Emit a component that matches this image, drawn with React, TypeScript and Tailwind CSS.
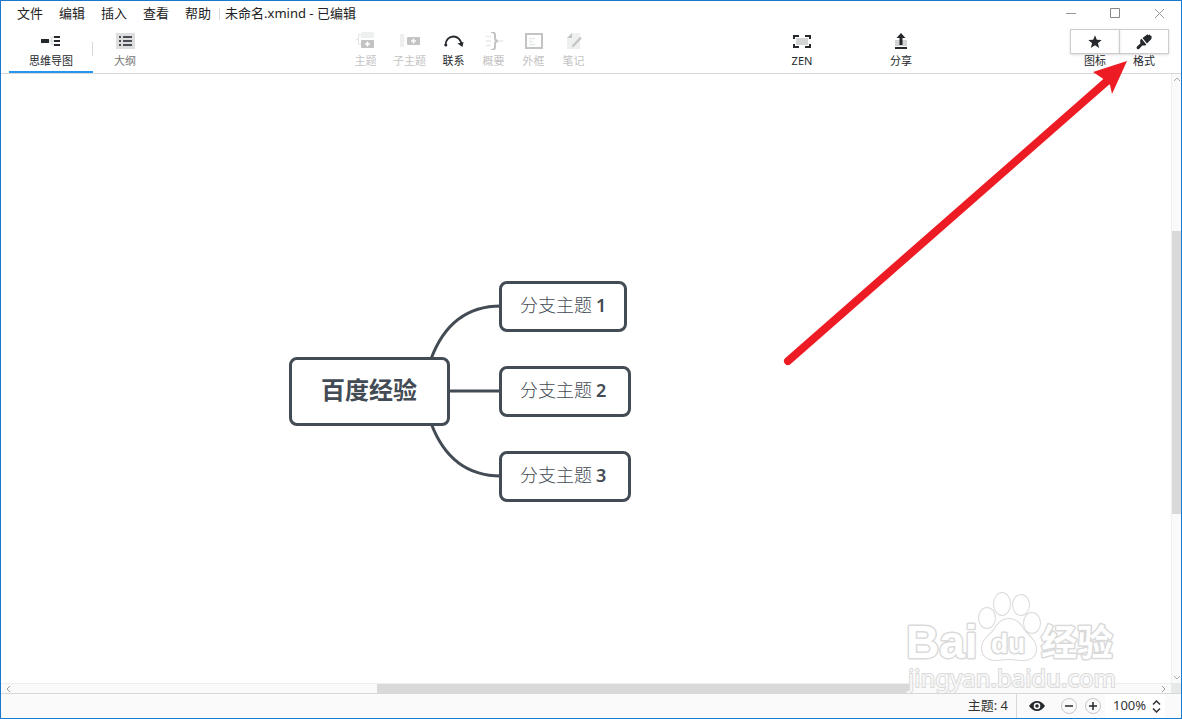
import React from "react";

const menus = ["文件", "编辑", "插入", "查看", "帮助"];

const MindMapIcon = () => (
  <svg width="20" height="18" viewBox="0 0 20 18" fill="none">
    <path d="M14 5h-1.500q-2 0-2 2v4q0 2 2 2H14M8 9h5" stroke="#dcdfdf" strokeWidth="1.500" />
    <path d="M0 7h8v4H0zM13 4h6v2h-6zM13 8h6v2h-6zM13 12h6v2h-6z" fill="#25292d" />
  </svg>
);

const OutlineIcon = () => (
  <svg width="20" height="18" viewBox="0 0 20 18">
    <path d="M1 1h19v16H1z" fill="#dedede" />
    <path
      d="M4 4h2v2H4zM8 4h9v2H8zM4 8h2v2H4zM8 8h9v2H8zM4 12h2v2H4zM8 12h9v2H8z"
      fill="#4a4f57"
    />
  </svg>
);

const TopicIcon = () => (
  <svg width="20" height="18" viewBox="0 0 20 18" fill="none">
    <path d="M5 2.500H2.500v10H5M0 7.500h2.500" stroke="#e3e6e6" />
    <rect x="5" y="0" width="13" height="6" rx="1" fill="#eef0f0" />
    <rect x="5" y="8" width="13" height="8" rx="1" fill="#c3c3c3" />
    <path d="M9 12h5M11.500 9.500v5" stroke="#fff" strokeWidth="1.500" />
  </svg>
);

const SubtopicIcon = () => (
  <svg width="20" height="18" viewBox="0 0 20 18" fill="none">
    <rect x="0" y="2" width="4" height="13" fill="#eef0f0" />
    <path d="M4 9h3" stroke="#eef0f0" />
    <rect x="7" y="5" width="13" height="8" rx="1" fill="#c3c3c3" />
    <path d="M11 9h5M13.500 6.500v5" stroke="#fff" strokeWidth="1.500" />
  </svg>
);

const RelationshipIcon = () => (
  <svg width="20" height="18" viewBox="0 0 20 18" fill="none">
    <path d="M1.500 13C1.500 8 5 4.500 9.500 4.500c4 0 6.500 2.500 8 7" stroke="#25292d" strokeWidth="1.800" />
    <circle cx="1.800" cy="13" r="1.500" fill="#25292d" />
    <path d="M13.500 11.500l6-1.500-1 5z" fill="#25292d" />
  </svg>
);

const SummaryIcon = () => (
  <svg width="20" height="18" viewBox="0 0 20 18" fill="none">
    <path d="M2 4.500h5M2 9h5M2 13.500h5M14 9h5" stroke="#e8eaea" strokeWidth="1.500" />
    <path
      d="M7 0c3 0 4 .8 4 3v3c0 2 .8 3 3 3-2.200 0-3 1-3 3v3c0 2.200-1 3-4 3"
      stroke="#c3c3c3"
      strokeWidth="2"
    />
  </svg>
);

const BoundaryIcon = () => (
  <svg width="20" height="18" viewBox="0 0 20 18" fill="none">
    <rect x="2" y="2" width="16" height="14" stroke="#c3c3c3" strokeWidth="2" />
    <path d="M5 6.500h6M5 9.500h4M5 12.500h6" stroke="#e6e9e9" strokeWidth="1.500" />
  </svg>
);

const NoteIcon = () => (
  <svg width="20" height="18" viewBox="0 0 20 18" fill="none">
    <path d="M8 1h8v16H3V6z" fill="#eef0f0" />
    <path d="M8 1v5H3z" fill="#c3c3c3" />
    <path d="M9.500 13.500l7.500-8" stroke="#c3c3c3" strokeWidth="2.200" />
    <path d="M8 15.500l.5-3 2 2z" fill="#c3c3c3" />
  </svg>
);

const ZenIcon = () => (
  <svg width="20" height="18" viewBox="0 0 20 18" fill="none">
    <path d="M4 6h12v7H4z" fill="#d3d5d5" />
    <path d="M2 7V4h5M13 4h5v3M18 12v3h-5M7 15H2v-3" stroke="#25292d" strokeWidth="2" />
  </svg>
);

const ShareIcon = () => (
  <svg width="20" height="18" viewBox="0 0 20 18">
    <path d="M4 8h12v6H4z" fill="#d3d5d5" />
    <path d="M4 15h12v2H4zM10 1l4.500 5h-3v7h-3V6h-3z" fill="#25292d" />
  </svg>
);

const StarIcon = () => (
  <svg width="14" height="14" viewBox="0 0 14 14">
    <path d="M7 .3l1.800 4.500 4.900.3-3.800 3.100 1.300 4.800L7 10.300 2.800 13l1.300-4.800L.3 5.100l4.900-.3z" fill="#25292d" />
  </svg>
);

const BrushIcon = () => (
  <svg width="16" height="16" viewBox="0 0 16 16">
    <path
      d="M6.500 4L11.500.300l1 1L13.800.500l.7 1.200 1.200.6-.3 2.700L11 9.500z M5.600 4.800l4.700 5.600-1 1.200-3-.2-3 3.300q-1.300 1-2.300 0t0-2.300l3.300-3L4.200 6z"
      fill="#25292d"
    />
  </svg>
);

const tools = [
  { label: "主题", icon: <TopicIcon />, width: "w-10", enabled: false },
  { label: "子主题", icon: <SubtopicIcon />, width: "w-12", enabled: false },
  { label: "联系", icon: <RelationshipIcon />, width: "w-10", enabled: true },
  { label: "概要", icon: <SummaryIcon />, width: "w-10", enabled: false },
  { label: "外框", icon: <BoundaryIcon />, width: "w-10", enabled: false },
  { label: "笔记", icon: <NoteIcon />, width: "w-10", enabled: false },
];

const branches = [
  { label: "分支主题", number: 1, position: "top-[207px] w-32" },
  { label: "分支主题", number: 2, position: "top-[292px] w-[132px]" },
  { label: "分支主题", number: 3, position: "top-[377px] w-[132px]" },
];

const TitleBar = () => (
  <div className="flex h-[25px] items-center pl-4 text-[13px] text-[#222]">
    <nav className="flex gap-4">
      {menus.map((menu) => (
        <button key={menu} type="button">
          {menu}
        </button>
      ))}
    </nav>
    <div className="ml-2 mr-[5px] h-3 w-px bg-[#d5dde0]" />
    <h1 className="whitespace-pre">未命名.xmind - 已编辑</h1>
    <div className="ml-auto flex">
      <button type="button" aria-label="最小化" className="flex w-11 justify-center">
        <svg width="11" height="11" viewBox="0 0 11 11" stroke="#999">
          <path d="M0 5.500h10" />
        </svg>
      </button>
      <button type="button" aria-label="最大化" className="flex w-11 justify-center">
        <svg width="11" height="11" viewBox="0 0 11 11" fill="none" stroke="#888">
          <path d="M.5.5h9v9h-9z" />
        </svg>
      </button>
      <button type="button" aria-label="关闭" className="flex w-11 justify-center">
        <svg width="11" height="11" viewBox="0 0 11 11" stroke="#999">
          <path d="M1 1l9 9M10 1l-9 9" />
        </svg>
      </button>
    </div>
  </div>
);

const Toolbar = () => (
  <header className="flex h-12 border-b border-[#d8d8d8] pl-2 pr-3 text-[11px] leading-[14px] text-[#25292d]">
    <div className="flex w-[152px]">
      <button
        type="button"
        className="flex w-[84px] flex-col items-center gap-1 border-b-2 border-[#2196f3] pt-[6px]"
      >
        <MindMapIcon />
        思维导图
      </button>
      <div className="-ml-px mt-4 h-[14px] w-px bg-[#d8d8d8]" />
      <button type="button" className="flex w-16 flex-col items-center gap-1 pt-[6px] text-[#777]">
        <OutlineIcon />
        大纲
      </button>
    </div>
    <div className="flex-1" />
    <div className="flex">
      {tools.map((tool) => (
        <button
          key={tool.label}
          type="button"
          disabled={!tool.enabled}
          className={`${tool.width} flex flex-col items-center gap-1 pt-[6px] disabled:text-[#c3c3c3]`}
        >
          {tool.icon}
          {tool.label}
        </button>
      ))}
    </div>
    <div className="flex-1" />
    <div className="mr-[145px] flex gap-[51px]">
      <button type="button" className="flex w-12 flex-col items-center gap-1 pt-[6px]">
        <ZenIcon />
        ZEN
      </button>
      <button type="button" className="flex w-12 flex-col items-center gap-1 pt-[6px]">
        <ShareIcon />
        分享
      </button>
    </div>
    <div className="flex pt-[3px]">
      <button type="button" className="flex flex-col items-center">
        <span className="flex h-[25px] w-[50px] items-center justify-center border border-[#ccc] shadow-sm">
          <StarIcon />
        </span>
        图标
      </button>
      <button type="button" className="-ml-px flex flex-col items-center">
        <span className="flex h-[25px] w-[50px] items-center justify-center border border-[#ccc] shadow-sm">
          <BrushIcon />
        </span>
        格式
      </button>
    </div>
  </header>
);

const MindMap = () => (
  <div className="relative flex-1 overflow-hidden bg-white text-[#434b54]">
    <svg
      className="absolute left-[420px] top-[220px]"
      width="90"
      height="194"
      viewBox="0 0 90 194"
      fill="none"
      stroke="#434b54"
      strokeWidth="3"
    >
      <path d="M10 65C23 30 46 12 80 12M20 97h60M10 129c13 35 36 53 70 53" />
    </svg>
    <div className="absolute left-72 top-[283px] flex h-[69px] w-[161px] items-center rounded-lg border-[3px] border-[#434b54] bg-white pb-1 pl-[29px] text-2xl font-bold">
      百度经验
    </div>
    {branches.map((branch) => (
      <div
        key={branch.number}
        className={`${branch.position} absolute left-[498px] flex h-[51px] items-center gap-1 whitespace-nowrap rounded-lg border-[3px] border-[#434b54] bg-white pb-1 pl-[18px] text-lg font-light`}
      >
        {branch.label}
        <span className="font-semibold">{branch.number}</span>
      </div>
    ))}
  </div>
);

const VerticalScrollbar = () => (
  <div className="flex w-[10px] flex-col border-l border-[#eee] bg-[#fafafa] py-[3px]">
    <div className="flex flex-[154] items-start justify-center">
      <svg width="8" height="5" viewBox="0 0 8 5" fill="none" stroke="#aaa">
        <path d="M1 4l3-3 3 3" />
      </svg>
    </div>
    <div className="flex-[283] bg-[#d9d9d9]" />
    <div className="flex flex-[166] items-end justify-center">
      <svg width="8" height="5" viewBox="0 0 8 5" fill="none" stroke="#aaa">
        <path d="M1 1l3 3 3-3" />
      </svg>
    </div>
  </div>
);

const HorizontalScrollbar = () => (
  <div className="flex h-[10px]">
    <div className="flex flex-1 border-t border-[#eee] bg-[#fafafa] px-[5px]">
      <div className="flex flex-[371] items-center">
        <svg width="5" height="8" viewBox="0 0 5 8" fill="none" stroke="#999">
          <path d="M4 1L1 4l3 3" />
        </svg>
      </div>
      <div className="flex-[532] bg-[#d9d9d9]" />
      <div className="flex flex-[257] items-center justify-end">
        <svg width="5" height="8" viewBox="0 0 5 8" fill="none" stroke="#999">
          <path d="M1 1l3 3-3 3" />
        </svg>
      </div>
    </div>
    <div className="w-[10px] bg-[#e6e9e9]" />
  </div>
);

const StatusBar = () => (
  <footer className="flex h-[25px] items-center justify-end border-t border-[#d8d8d8] bg-[#fafafa] pr-4 text-[13px] text-[#333]">
    <span>主题: 4</span>
    <div className="ml-2 h-full w-px bg-[#d8d8d8]" />
    <button type="button" aria-label="预览" className="ml-3">
      <svg width="16" height="12" viewBox="0 0 16 12">
        <path d="M0 6q3.500-5 8-5t8 5q-3.500 5-8 5T0 6z" fill="#25292d" />
        <circle cx="8" cy="6" r="3.300" fill="#fafafa" />
        <circle cx="8" cy="6" r="1.800" fill="#25292d" />
      </svg>
    </button>
    <button type="button" aria-label="缩小" className="ml-4">
      <svg width="16" height="16" viewBox="0 0 16 16" fill="none">
        <circle cx="8" cy="8" r="7.500" stroke="#c8c8c8" />
        <path d="M4 8h8" stroke="#25292d" strokeWidth="1.500" />
      </svg>
    </button>
    <button type="button" aria-label="放大" className="ml-2">
      <svg width="16" height="16" viewBox="0 0 16 16" fill="none">
        <circle cx="8" cy="8" r="7.500" stroke="#c8c8c8" />
        <path d="M4 8h8M8 4v8" stroke="#25292d" strokeWidth="1.500" />
      </svg>
    </button>
    <div className="relative ml-1 flex h-full items-center bg-white">
      <select aria-label="缩放比例" defaultValue="100" className="w-[60px] appearance-none bg-transparent pl-2">
        <option value="50">50%</option>
        <option value="100">100%</option>
        <option value="200">200%</option>
      </select>
      <svg
        className="pointer-events-none absolute right-1"
        width="9"
        height="13"
        viewBox="0 0 9 13"
        fill="none"
        stroke="#333"
        strokeWidth="1.500"
      >
        <path d="M1 4.500L4.500 1 8 4.500M1 8.500L4.500 12 8 8.500" />
      </svg>
    </div>
  </footer>
);

const Watermark = () => (
  <svg
    className="pointer-events-none absolute bottom-5 right-[60px]"
    width="215"
    height="108"
    viewBox="0 0 215 108"
    fill="#fff"
    stroke="#dadada"
    strokeWidth="3"
    strokeLinejoin="round"
    paintOrder="stroke"
  >
    <text x="0" y="68" fontSize="46" fontWeight="700" fontFamily="'Liberation Sans', sans-serif">
      Bai
    </text>
    <g strokeWidth="2">
      <ellipse cx="81" cy="28" rx="8" ry="10" />
      <ellipse cx="96" cy="14" rx="8" ry="11" />
      <ellipse cx="115" cy="15" rx="8" ry="10" />
      <ellipse cx="126" cy="33" rx="8" ry="10" />
      <path d="M103 29c8 0 11 5 15 11 5 7 12 10 12 19 0 7-5 11-12 11-6 0-9-1-15-1s-9 1-14 1c-8 0-13-5-13-12 0-8 7-12 12-18 4-6 7-11 15-11z" />
    </g>
    <text x="85" y="63" fontSize="28" fontWeight="700" fontFamily="'Liberation Sans', sans-serif">
      du
    </text>
    <text x="135" y="66" fontSize="36" fontWeight="700" fontFamily="'Noto Sans CJK SC', sans-serif">
      经验
    </text>
    <text
      x="2"
      y="97"
      fontSize="24"
      fontWeight="400"
      fillOpacity="0.8"
      strokeWidth="2"
      fontFamily="'Noto Sans', sans-serif"
    >
      jingyan.baidu.com
    </text>
  </svg>
);

const Arrow = () => (
  <svg
    className="pointer-events-none absolute right-[51px] top-[60px]"
    width="350"
    height="310"
    viewBox="0 0 350 310"
  >
    <path d="M8 300L326 21" stroke="#ed1c24" strokeWidth="8" strokeLinecap="round" />
    <path d="M347 0L313 11l9 6 8 7 2 9z" fill="#ed1c24" />
  </svg>
);

const App = () => {
  return (
    <div className="relative flex min-h-screen flex-col overflow-hidden border border-[#1979ca] bg-white font-['Noto_Sans','Noto_Sans_CJK_SC',sans-serif]">
      <TitleBar />
      <Toolbar />
      <main className="flex min-h-[480px] flex-1">
        <MindMap />
        <VerticalScrollbar />
      </main>
      <HorizontalScrollbar />
      <StatusBar />
      <Watermark />
      <Arrow />
    </div>
  );
};

export default App;
